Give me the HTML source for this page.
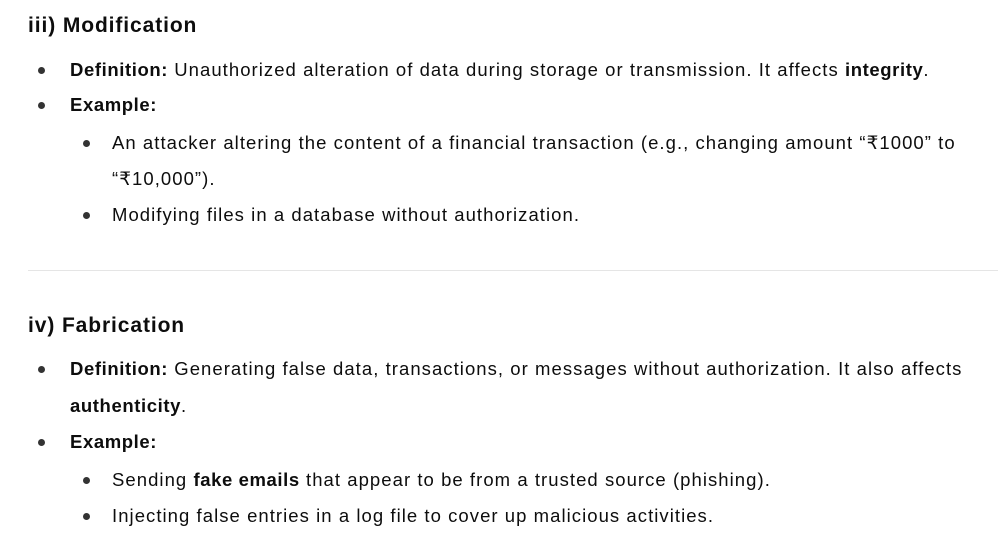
<!DOCTYPE html>
<html><head><meta charset="utf-8"><style>
body{margin:0;width:998px;height:552px;background:#fff;color:#0d0d0d;font-family:"Liberation Sans",sans-serif;position:relative;overflow:hidden}
.l{position:absolute;white-space:nowrap;font-size:18.5px;line-height:24px;letter-spacing:1.05px}
.h{position:absolute;font-size:21px;font-weight:bold;line-height:28px;white-space:nowrap;letter-spacing:0.9px}
.d{position:absolute;width:7px;height:7px;border-radius:50%;background:#333}
b{font-weight:bold;letter-spacing:0.6px}
.hr{position:absolute;left:28px;width:970px;top:270px;height:1px;background:#e5e5e5}
</style></head><body>
<div class="h" style="left:28px;top:12px">iii) Modification</div>
<div class="d" style="left:38px;top:67px"></div>
<div class="l" style="left:70px;top:58px"><b>Definition:</b> Unauthorized alteration of data during storage or transmission. It affects <b>integrity</b>.</div>
<div class="d" style="left:38px;top:102px"></div>
<div class="l" style="left:70px;top:93px"><b>Example:</b></div>
<div class="d" style="left:83px;top:140px"></div>
<div class="l" style="left:112px;top:131px">An attacker altering the content of a financial transaction (e.g., changing amount “₹1000” to</div>
<div class="l" style="left:112px;top:167px">“₹10,000”).</div>
<div class="d" style="left:83px;top:212px"></div>
<div class="l" style="left:112px;top:203px">Modifying files in a database without authorization.</div>
<div class="hr"></div>
<div class="h" style="left:28px;top:312px">iv) Fabrication</div>
<div class="d" style="left:38px;top:366px"></div>
<div class="l" style="left:70px;top:357px"><b>Definition:</b> Generating false data, transactions, or messages without authorization. It also affects</div>
<div class="l" style="left:70px;top:394px"><b>authenticity</b>.</div>
<div class="d" style="left:38px;top:439px"></div>
<div class="l" style="left:70px;top:430px"><b>Example:</b></div>
<div class="d" style="left:83px;top:477px"></div>
<div class="l" style="left:112px;top:468px">Sending <b>fake emails</b> that appear to be from a trusted source (phishing).</div>
<div class="d" style="left:83px;top:513px"></div>
<div class="l" style="left:112px;top:504px">Injecting false entries in a log file to cover up malicious activities.</div>
</body></html>
